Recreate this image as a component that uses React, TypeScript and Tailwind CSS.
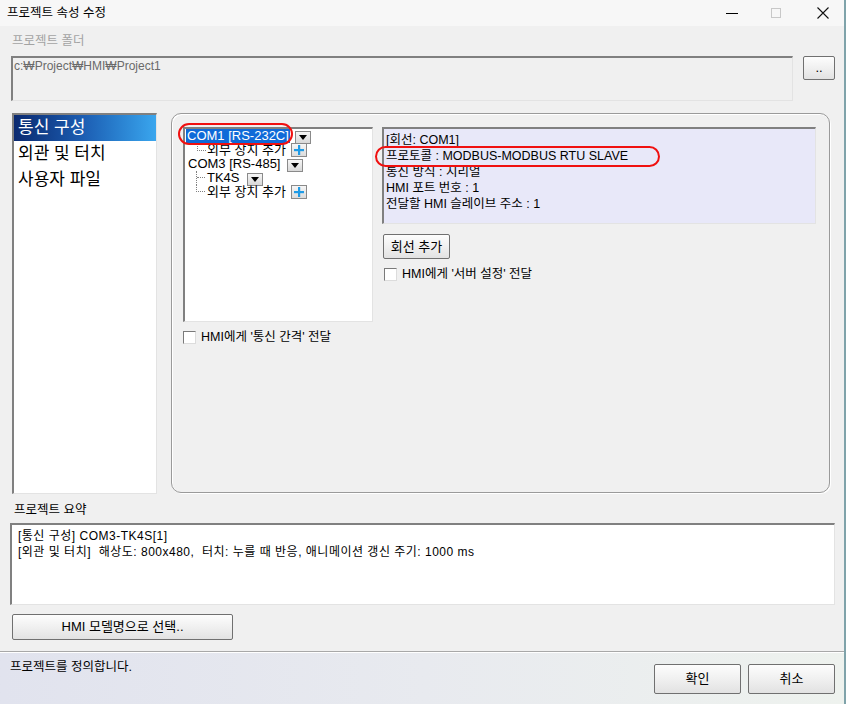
import React from "react";

const FONT = "font-['Liberation_Sans','Noto_Sans_CJK_KR',sans-serif]";

// 작은 드롭다운 버튼
function DropBtn() {
  return (
    <span className="inline-flex items-center justify-center w-[16px] h-[13px] border border-[#8a8a8a] bg-gradient-to-b from-[#f6f6f6] to-[#d8d8d8] shrink-0">
      <svg viewBox="0 0 8 5" className="w-[8px] h-[5px]">
        <path d="M0 0h8L4 5z" fill="#000" />
      </svg>
    </span>
  );
}

// 추가(+) 버튼
function PlusBtn() {
  return (
    <span className="inline-flex items-center justify-center w-[16px] h-[14px] border border-[#8a8a8a] bg-gradient-to-b from-[#f6f6f6] to-[#dcdcdc] shrink-0">
      <svg viewBox="0 0 10 10" className="w-[10px] h-[10px]">
        <rect x="4" y="0" width="2.2" height="10" fill="#1f9be6" />
        <rect x="0" y="4" width="10" height="2.2" fill="#1f9be6" />
      </svg>
    </span>
  );
}

function CheckBox({ label }: { label: string }) {
  return (
    <div className="flex items-center gap-[5px] text-[12.5px] leading-[14px]">
      <span className="w-[13px] h-[13px] border border-[#7a7a7a] border-r-[#dcdcdc] border-b-[#dcdcdc] bg-white shrink-0" />
      <span>{label}</span>
    </div>
  );
}

function WinBtn({ label, className }: { label: string; className: string }) {
  return (
    <button
      className={`flex items-center justify-center border border-[#707070] rounded-[2px] bg-gradient-to-b from-[#fdfdfd] via-[#f0f0f0] to-[#e2e2e2] text-[13px] text-black ${className}`}
    >
      {label}
    </button>
  );
}

const sunken =
  "border border-[#a0a0a0] border-t-2 border-l-2 border-t-[#808080] border-l-[#808080] border-r-[#e3e3e3] border-b-[#e3e3e3]";

export default function App() {
  return (
    <div
      className={`w-[846px] h-[704px] bg-[#f0f0f0] flex flex-col overflow-hidden text-black border-r-2 border-[#7fa3aa] ${FONT}`}
    >
      {/* 타이틀 바 */}
      <div className="h-[26px] bg-[#f7f7f7] flex items-center pl-[7px] shrink-0">
        <span className="text-[12.5px]">프로젝트 속성 수정</span>
        <div className="ml-auto flex items-center h-full">
          <span className="w-[12px] h-[1px] bg-black mr-[33px]" />
          <span className="w-[10px] h-[10px] border border-[#c8c8c8] mr-[36px]" />
          <svg viewBox="0 0 12 12" className="w-[12px] h-[12px] mr-[15px]">
            <path d="M0.5 0.5l11 11M11.5 0.5l-11 11" stroke="#111" strokeWidth="1.1" />
          </svg>
        </div>
      </div>

      {/* 프로젝트 폴더 */}
      <div className="mt-[8px] ml-[12px] text-[12.5px] leading-[14px] text-[#a3a3a3]">프로젝트 폴더</div>
      <div className="mt-[8px] flex items-start">
        <div className={`ml-[11px] w-[782px] h-[45px] ${sunken} bg-[#f0f0f0] text-[12px] leading-[14px] text-[#6a6a6a] pl-[1px] pt-[1px]`}>
          c:₩Project₩HMI₩Project1
        </div>
        <WinBtn label=".." className="ml-[10px] w-[32px] h-[24px] text-[10px] text-[#777]" />
      </div>

      {/* 본문 */}
      <div className="mt-[12px] flex items-start">
        {/* 왼쪽 목록 */}
        <div className={`ml-[12px] w-[145px] h-[381px] ${sunken} bg-white text-[17px]`}>
          <div className="h-[26px] flex items-center pl-[4px] text-white bg-gradient-to-r from-[#0b2a70] via-[#1d5fb4] to-[#3aa6ee]">
            통신 구성
          </div>
          <div className="h-[26px] flex items-center pl-[4px]">외관 및 터치</div>
          <div className="h-[26px] flex items-center pl-[4px]">사용자 파일</div>
        </div>

        {/* 통신 구성 패널 */}
        <div className="relative ml-[14px] w-[659px] h-[380px] rounded-[10px] border border-[#9a9a9a] shadow-[inset_1px_1px_0_#ffffff,1px_1px_0_#ffffff] flex pt-[13px] pl-[11px]">
          {/* 트리 */}
          <div className="flex flex-col">
            <div className={`w-[190px] h-[195px] ${sunken} bg-white text-[13px] leading-[14px] pl-[1px]`}>
              <div className="h-[14px] flex items-center">
                <span className="bg-[#0f6ad8] text-white px-[1px] h-[14px]">COM1 [RS-232C]</span>
                <span className="ml-[5px]"><DropBtn /></span>
              </div>
              <div className="h-[14px] flex items-center">
                <span className="ml-[11px] w-[9px] h-[8px] self-start border-l border-b border-dotted border-[#808080]" />
                <span className="ml-[1px]">외부 장치 추가</span>
                <span className="ml-[5px]"><PlusBtn /></span>
              </div>
              <div className="h-[14px] flex items-center">
                <span className="ml-[2px]">COM3 [RS-485]</span>
                <span className="ml-[7px]"><DropBtn /></span>
              </div>
              <div className="h-[14px] flex items-center">
                <span className="ml-[10px] w-[9px] h-[14px] self-start border-l border-dotted border-[#808080]">
                  <span className="block h-[7px] border-b border-dotted border-[#808080]" />
                </span>
                <span className="ml-[2px]">TK4S</span>
                <span className="ml-[7px]"><DropBtn /></span>
              </div>
              <div className="h-[14px] flex items-center">
                <span className="ml-[10px] w-[9px] h-[7px] self-start border-l border-b border-dotted border-[#808080]" />
                <span className="ml-[2px]">외부 장치 추가</span>
                <span className="ml-[5px]"><PlusBtn /></span>
              </div>
            </div>
            <div className="mt-[8px]">
              <CheckBox label="HMI에게 '통신 간격' 전달" />
            </div>
          </div>

          {/* 회선 정보 */}
          <div className="ml-[9px] flex flex-col">
            <div className={`w-[434px] h-[97px] ${sunken} bg-[#e8e8f9] text-[12.5px] leading-[16px] pl-[2px] pt-[3px]`}>
              <div>[회선: COM1]</div>
              <div>프로토콜 : MODBUS-MODBUS RTU SLAVE</div>
              <div>통신 방식 : 시리얼</div>
              <div>HMI 포트 번호 : 1</div>
              <div>전달할 HMI 슬레이브 주소 : 1</div>
            </div>
            <WinBtn label="회선 추가" className="mt-[10px] ml-[1px] w-[67px] h-[25px]" />
            <div className="mt-[8px] ml-[2px]">
              <CheckBox label="HMI에게 '서버 설정' 전달" />
            </div>
          </div>

          {/* 빨간 강조 표시 */}
          <span className="absolute left-[6px] top-[9px] w-[115px] h-[22px] rounded-full border-2 border-[#f01010]" />
          <span className="absolute left-[203px] top-[32px] w-[285px] h-[21px] rounded-full border-2 border-[#f01010]" />
        </div>
      </div>

      {/* 프로젝트 요약 */}
      <div className="mt-[9px] ml-[14px] text-[12.5px] leading-[14px]">프로젝트 요약</div>
      <div className={`mt-[6px] ml-[10px] w-[825px] h-[82px] ${sunken} bg-white text-[12px] leading-[16px] tracking-[0.5px] pl-[6px] pt-[3px]`}>
        <div>[통신 구성] COM3-TK4S[1]</div>
        <div className="whitespace-pre">[외관 및 터치]  해상도: 800x480,  터치: 누를 때 반응, 애니메이션 갱신 주기: 1000 ms</div>
      </div>
      <WinBtn label="HMI 모델명으로 선택.." className="mt-[9px] ml-[12px] w-[221px] h-[26px]" />

      {/* 상태 바 */}
      <div className="mt-[11px] flex-1 border-t border-[#a8a8a8] shadow-[inset_0_1px_0_#ffffff] bg-gradient-to-r from-[#e1e3ee] via-[#e8eaef] to-[#eef2ee] flex items-start">
        <div className="pl-[10px] pt-[8px] text-[12.5px] leading-[14px]">프로젝트를 정의합니다.</div>
        <div className="ml-auto mt-[12px] mr-[9px] flex gap-[7px]">
          <WinBtn label="확인" className="w-[87px] h-[30px]" />
          <WinBtn label="취소" className="w-[87px] h-[30px]" />
        </div>
      </div>
    </div>
  );
}
